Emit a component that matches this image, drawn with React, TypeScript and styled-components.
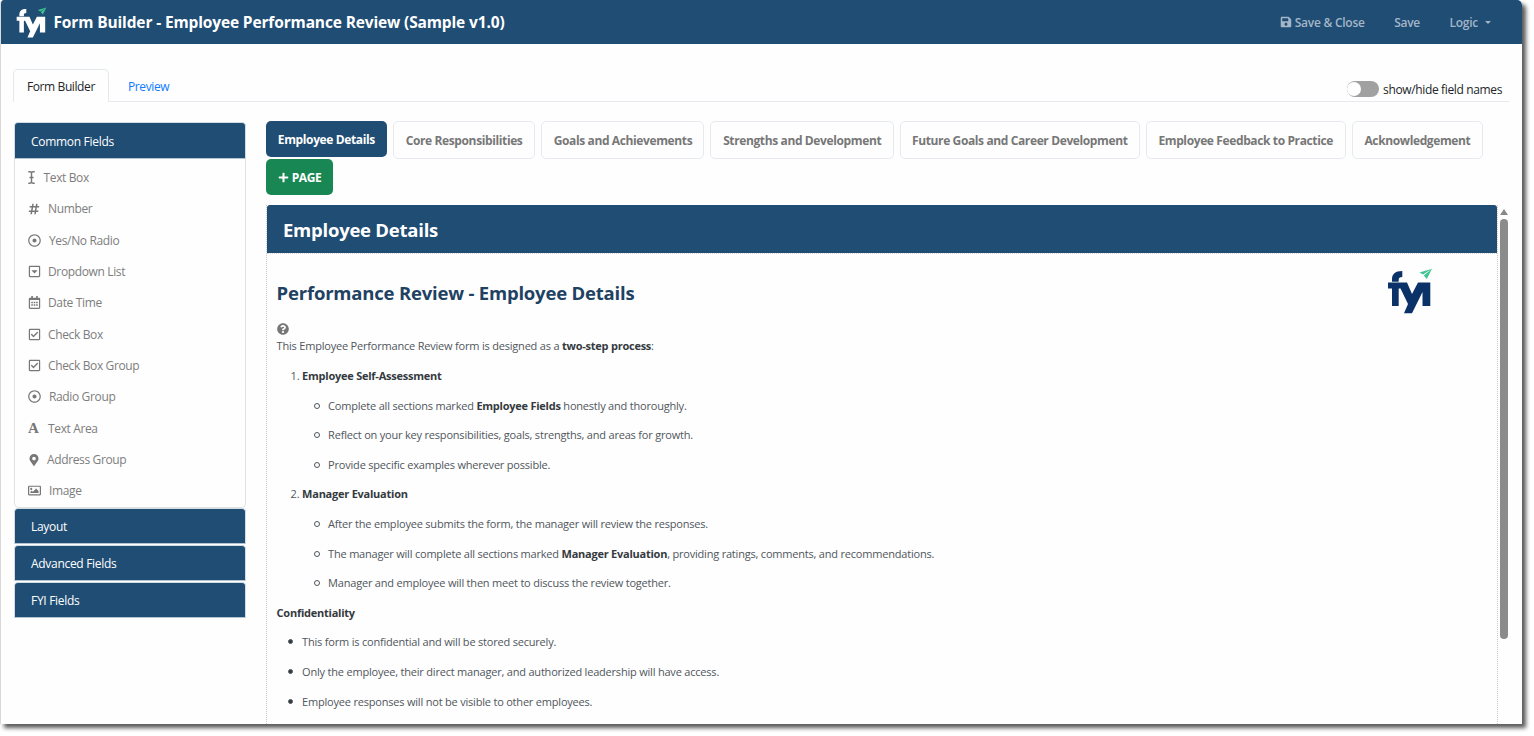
import React from "react";
import styled, { createGlobalStyle, css } from "styled-components";
import {
  FaHashtag,
  FaRegDotCircle,
  FaRegCaretSquareDown,
  FaRegCalendarAlt,
  FaRegCheckSquare,
  FaMapMarkerAlt,
  FaRegImage,
  FaQuestionCircle,
  FaPlus,
  FaSave,
} from "react-icons/fa";

const navy = "#204d74";

const GlobalStyle = createGlobalStyle`
  *, *::before { box-sizing: border-box; }
  html, body { height: 736px; }
  body { margin: 0; background: #fff; overflow: hidden; font-family: "Open Sans", "Noto Sans", sans-serif; font-size: 12px; color: #212529; }
`;

const Window = styled.div`
  width: 1522px;
  height: 724px;
  display: flex;
  flex-direction: column;
  overflow: hidden;
  background: #fefefe;
  border-left: 1px solid #d9d9d9;
  border-radius: 4px 5px 0 0;
`;

const Shadow = styled.div`
  width: 1522px;
  height: 724px;
  border-radius: 4px 5px 0 0;
  box-shadow: 4px 4px 4px rgba(0, 0, 0, 0.65);
`;

const TopBar = styled.header`
  flex: none;
  height: 44px;
  display: flex;
  align-items: center;
  padding: 0 31px 0 15px;
  background: ${navy};
  color: #fff;
`;

const Title = styled.h1`
  margin: 0 auto 0 6.5px;
  font-size: 15.5px;
  font-weight: 700;
  line-height: 22px;
  letter-spacing: -0.14px;
  white-space: nowrap;
`;

const NavItem = styled.div`
  display: flex;
  align-items: center;
  gap: 3px;
  margin-left: 29.5px;
  font-size: 12px;
  font-weight: 600;
  letter-spacing: -0.26px;
  color: #a3b6c8;
  white-space: nowrap;
`;

const Caret = styled.span`
  margin-left: 4px;
  border: 3px solid transparent;
  border-top-color: #a3b6c8;
  border-bottom: 0;
`;

const TabRow = styled.div`
  flex: none;
  height: 58px;
  margin: 0 13px 0 12px;
  display: flex;
  align-items: flex-end;
  border-bottom: 1px solid #e6eaee;
`;

const Tab = styled.div<{ $active?: boolean }>`
  height: 33px;
  padding: 0 13px;
  line-height: 38px;
  font-size: 12px;
  letter-spacing: -0.4px;
  color: #0d7bff;
  margin-left: 6px;
  white-space: nowrap;
  ${(p) =>
    p.$active &&
    css`
      margin: 0 0 -1px;
      width: 96px;
      line-height: 34px;
      color: #212529;
      background: #fefefe;
      border: 1px solid #e3e8ec;
      border-bottom: 0;
      border-radius: 5px 5px 0 0;
    `}
`;

const Toggle = styled.div`
  display: flex;
  align-items: center;
  gap: 4px;
  margin: 0 7px 0 auto;
  height: 23px;
  font-size: 12px;
  letter-spacing: -0.36px;
  white-space: nowrap;
`;

const Track = styled.span`
  display: flex;
  width: 32px;
  height: 16px;
  margin-bottom: 2px;
  border-radius: 8px;
  background: #a1a1a1;
  padding: 1px 0;
`;

const Knob = styled.span`
  width: 14px;
  height: 14px;
  border-radius: 50%;
  background: #fff;
`;

const Body = styled.main`
  flex: 1;
  min-height: 0;
  display: flex;
  gap: 20px;
  padding-left: 13px;
`;

const Sidebar = styled.aside`
  flex: none;
  width: 232px;
  padding-top: 20px;
`;

const GroupHeader = styled.div<{ $open?: boolean }>`
  height: ${(p) => (p.$open ? 37 : 36)}px;
  margin-bottom: ${(p) => (p.$open ? 0 : 1)}px;
  padding-left: 16px;
  line-height: ${(p) => (p.$open ? 37 : 35)}px;
  font-size: 12px;
  letter-spacing: -0.3px;
  color: #fff;
  background: ${navy};
  border: 1px solid #d5dde4;
  border-bottom-color: #b4c3d0;
  border-radius: 4px 4px 0 0;
`;

const FieldList = styled.div`
  height: 349px;
  padding: 3px 0 0 13px;
  border: 1px solid #dfe1e3;
  border-top: 0;
  border-radius: 0 0 5px 5px;
`;

const Field = styled.div<{ $gap: number }>`
  height: 31.33px;
  display: flex;
  align-items: center;
  gap: ${(p) => p.$gap}px;
  font-size: 12px;
  letter-spacing: -0.36px;
  color: #7d7d7d;
  svg { flex: none; color: #777; }
`;

const FontGlyph = styled.span`
  width: 12px;
  font: 700 15px/15px "Liberation Serif", serif;
  color: #777;
`;

const Content = styled.section`
  flex: none;
  width: 1244px;
  padding-top: 19.4px;
  display: flex;
  flex-direction: column;
`;

const Pages = styled.div`
  flex: none;
  display: flex;
  flex-wrap: wrap;
  align-items: flex-start;
  column-gap: 6px;
  height: 84px;
  align-content: flex-start;
`;

const PageTab = styled.div<{ $w: number; $kind?: "active" | "add" }>`
  width: ${(p) => p.$w}px;
  height: 38px;
  display: flex;
  align-items: center;
  justify-content: center;
  gap: 3px;
  border: 1px solid #e6eaee;
  border-radius: 5px;
  font-size: 12px;
  font-weight: 700;
  letter-spacing: -0.38px;
  white-space: nowrap;
  color: #777;
  ${(p) =>
    p.$kind &&
    css`
      height: 36px;
      color: #fff;
      border: 0;
      background: ${p.$kind === "add" ? "#198754" : navy};
    `}
`;

const PanelRow = styled.div`
  flex: 1;
  min-height: 0;
  display: flex;
`;

const Panel = styled.div`
  width: 1232px;
  flex: none;
  display: flex;
  flex-direction: column;
  border: 1px dotted #c8c8c8;
  border-width: 0 1px;
`;

const PanelHeader = styled.h2`
  flex: none;
  margin: 0;
  height: 48px;
  padding-left: 16px;
  line-height: 49px;
  font-size: 18.5px;
  font-weight: 700;
  letter-spacing: -0.24px;
  color: #fff;
  background: ${navy};
  border-radius: 3px 3px 0 0;
`;

const Doc = styled.div`
  display: flex;
  justify-content: space-between;
  padding: 0 64px 0 9.6px;
  border-top: 1px dotted #d5d5d5;
`;

const LogoBox = styled.div`
  padding-top: 14px;
`;

const DocText = styled.article`
  font-size: 11px;
  letter-spacing: -0.2px;
  color: #50565c;
  white-space: nowrap;
  b { color: #343a40; font-weight: 700; letter-spacing: -0.24px; }
`;

const DocTitle = styled.h3`
  margin: 26px 0 0;
  height: 40px;
  line-height: 26px;
  font-size: 18.5px;
  font-weight: 700;
  letter-spacing: -0.2px;
  color: #1f4263;
`;

const Help = styled.div`
  height: 17px;
  display: flex;
  align-items: center;
  color: #777;
`;

const Line = styled.div<{ $indent?: number }>`
  height: 29.6px;
  line-height: 18px;
  display: flex;
  padding-left: ${(p) => p.$indent ?? 0}px;
  white-space: pre;
`;

const Marker = styled.span<{ $shape: "ring" | "disc" | "number" }>`
  flex: none;
  width: ${(p) => (p.$shape === "number" ? 11.5 : 14.5)}px;
  &::before {
    content: "";
    display: ${(p) => (p.$shape === "number" ? "none" : "block")};
    width: ${(p) => (p.$shape === "disc" ? 5 : 6)}px;
    height: ${(p) => (p.$shape === "disc" ? 5 : 6)}px;
    margin-top: 6px;
    border-radius: 50%;
    border: 1px solid #50565c;
    background: ${(p) => (p.$shape === "disc" ? "#343a40" : "transparent")};
  }
`;

const Scroll = styled.div`
  width: 12px;
  display: flex;
  flex-direction: column;
  align-items: center;
  padding-top: 3.5px;
`;

const Arrow = styled.span`
  border: 4px solid transparent;
  border-top: 0;
  border-bottom: 6px solid #888;
`;

const Thumb = styled.span`
  width: 8px;
  height: 420px;
  margin-top: 4px;
  border-radius: 4px;
  background: #8b8b8b;
`;

function Logo({ size, color }: { size: number; color: string }) {
  return (
    <svg width={size} height={size} viewBox="0 0 46 46">
      <path fill={color} d="M5 13.800V11.500C5 6 8 3 15.300 3v6c-2.800 0-3.600 1-3.600 3v1.800z" />
      <path fill={color} d="M1 14.500h19L25 26l6-11.500h12.300V38h-7.800V24L25 45.300h-8L21 36l-7.500-15.500h-1.800V38H5V20.500H1z" />
      <path fill="#3fc590" d="M32.500 4.500L45 .8 36 6.500zM45 .8L39.800 11l-3-3.600z" />
    </svg>
  );
}

function CursorIcon() {
  return (
    <svg width="7" height="13" viewBox="0 0 7 13" fill="none" stroke="currentColor" strokeWidth="1.400">
      <path d="M.3 .8h1.700Q3.500 .8 3.500 2.200V10.800Q3.500 12.200 2 12.200H.3M6.700 .8H5Q3.500 .8 3.500 2.200M3.500 10.800Q3.500 12.200 5 12.200H6.700M1.500 6.500h4" />
    </svg>
  );
}

const fields: [string, React.ReactNode, number][] = [
  ["Text Box", <CursorIcon />, 8.5],
  ["Number", <FaHashtag size={12} />, 8],
  ["Yes/No Radio", <FaRegDotCircle size={13} />, 8],
  ["Dropdown List", <FaRegCaretSquareDown size={13} />, 7],
  ["Date Time", <FaRegCalendarAlt size={13} />, 7],
  ["Check Box", <FaRegCheckSquare size={13} />, 7],
  ["Check Box Group", <FaRegCheckSquare size={13} />, 7],
  ["Radio Group", <FaRegDotCircle size={13} />, 8],
  ["Text Area", <FontGlyph aria-hidden>A</FontGlyph>, 8],
  ["Address Group", <FaMapMarkerAlt size={12} />, 7],
  ["Image", <FaRegImage size={13} />, 8],
];

const pages: [string, number][] = [
  ["Core Responsibilities", 142.8],
  ["Goals and Achievements", 163],
  ["Strengths and Development", 183.4],
  ["Future Goals and Career Development", 239.8],
  ["Employee Feedback to Practice", 200],
  ["Acknowledgement", 131.5],
];

export default function App() {
  return (
    <Shadow>
      <GlobalStyle />
      <Window>
        <TopBar>
          <Logo size={31} color="#fff" />
          <Title>Form Builder - Employee Performance Review (Sample v1.0)</Title>
          <NavItem><FaSave size={12} />Save &amp; Close</NavItem>
          <NavItem>Save</NavItem>
          <NavItem>Logic<Caret /></NavItem>
        </TopBar>
        <TabRow>
          <Tab $active>Form Builder</Tab>
          <Tab>Preview</Tab>
          <Toggle><Track><Knob /></Track>show/hide field names</Toggle>
        </TabRow>
        <Body>
          <Sidebar>
            <GroupHeader $open>Common Fields</GroupHeader>
            <FieldList>
              {fields.map(([name, icon, gap]) => (
                <Field key={name} $gap={gap}>{icon}{name}</Field>
              ))}
            </FieldList>
            <GroupHeader>Layout</GroupHeader>
            <GroupHeader>Advanced Fields</GroupHeader>
            <GroupHeader>FYI Fields</GroupHeader>
          </Sidebar>
          <Content>
            <Pages>
              <PageTab $w={120.7} $kind="active">Employee Details</PageTab>
              {pages.map(([name, w]) => <PageTab key={name} $w={w}>{name}</PageTab>)}
              <PageTab $w={67} $kind="add"><FaPlus size={11} />PAGE</PageTab>
            </Pages>
            <PanelRow>
              <Panel>
                <PanelHeader>Employee Details</PanelHeader>
                <Doc>
                  <DocText>
                    <DocTitle>Performance Review - Employee Details</DocTitle>
                    <Help><FaQuestionCircle size={12} /></Help>
                    <Line>This Employee Performance Review form is designed as a <b>two-step process</b>:</Line>
                    <Line $indent={14}><Marker $shape="number">1.</Marker><b>Employee Self-Assessment</b></Line>
                    <Line $indent={37}><Marker $shape="ring" />Complete all sections marked <b>Employee Fields</b> honestly and thoroughly.</Line>
                    <Line $indent={37}><Marker $shape="ring" />Reflect on your key responsibilities, goals, strengths, and areas for growth.</Line>
                    <Line $indent={37}><Marker $shape="ring" />Provide specific examples wherever possible.</Line>
                    <Line $indent={14}><Marker $shape="number">2.</Marker><b>Manager Evaluation</b></Line>
                    <Line $indent={37}><Marker $shape="ring" />After the employee submits the form, the manager will review the responses.</Line>
                    <Line $indent={37}><Marker $shape="ring" />The manager will complete all sections marked <b>Manager Evaluation</b>, providing ratings, comments, and recommendations.</Line>
                    <Line $indent={37}><Marker $shape="ring" />Manager and employee will then meet to discuss the review together.</Line>
                    <Line><b>Confidentiality</b></Line>
                    <Line $indent={11}><Marker $shape="disc" />This form is confidential and will be stored securely.</Line>
                    <Line $indent={11}><Marker $shape="disc" />Only the employee, their direct manager, and authorized leadership will have access.</Line>
                    <Line $indent={11}><Marker $shape="disc" />Employee responses will not be visible to other employees.</Line>
                  </DocText>
                  <LogoBox><Logo size={46} color="#0b3268" /></LogoBox>
                </Doc>
              </Panel>
              <Scroll><Arrow /><Thumb /></Scroll>
            </PanelRow>
          </Content>
        </Body>
      </Window>
    </Shadow>
  );
}
